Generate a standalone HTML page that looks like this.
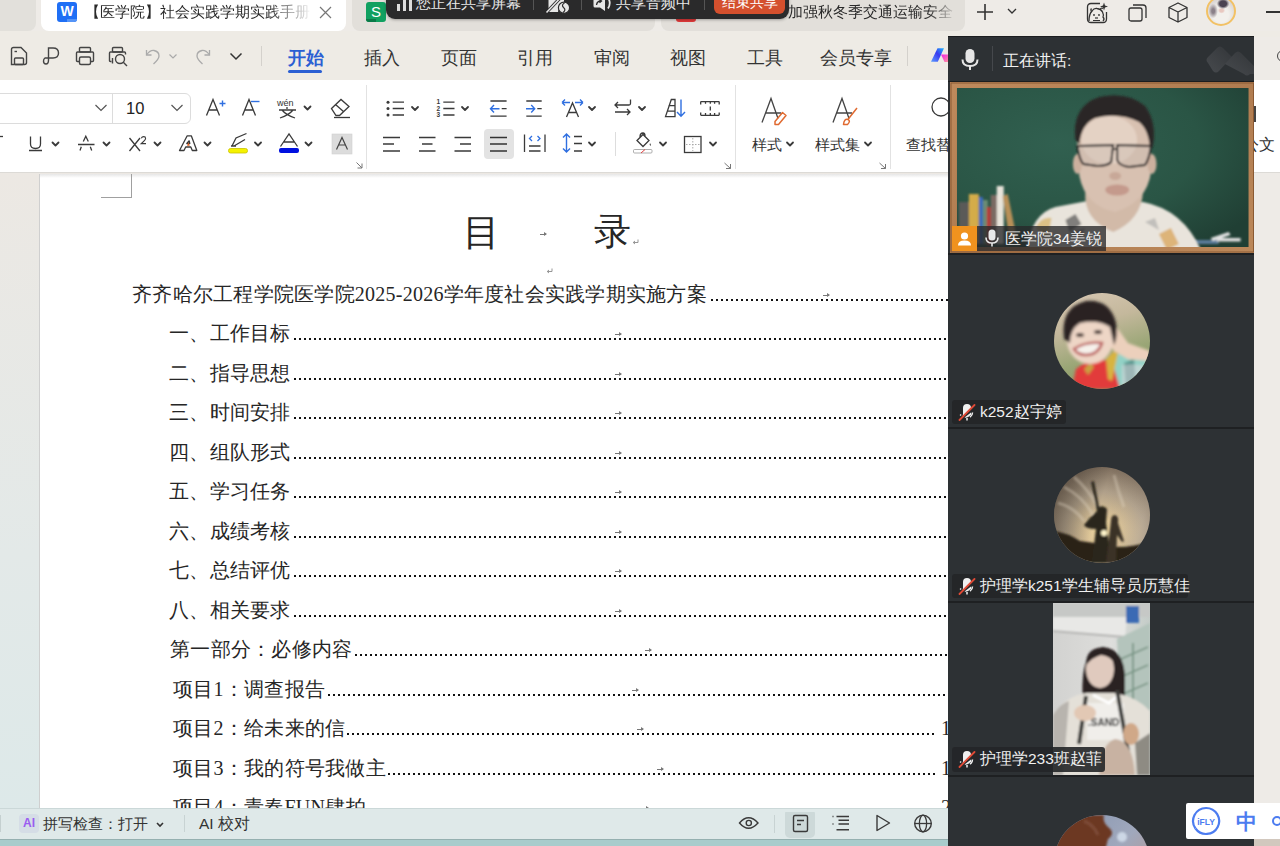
<!DOCTYPE html>
<html><head><meta charset="utf-8">
<style>
@font-face{font-family:"LSCJK";src:local("Liberation Sans");unicode-range:U+2E80-9FFF,U+F900-FAFF,U+FE30-FE4F,U+FF00-FFEF,U+3000-303F;size-adjust:133.333%}
@font-face{font-family:"LSCJK";src:local("Liberation Sans Bold");font-weight:bold;unicode-range:U+2E80-9FFF,U+F900-FAFF,U+FE30-FE4F,U+FF00-FFEF,U+3000-303F;size-adjust:133.333%}
*{margin:0;padding:0;box-sizing:border-box}
html,body{width:1280px;height:846px;overflow:hidden;background:#edeae6;font-family:"LSCJK","Liberation Sans",sans-serif;color:#333}
.a{position:absolute}
#tabbar{left:0;top:0;width:1280px;height:38px;background:#eeebe7}
#menu{left:0;top:31px;width:1280px;height:49px;background:#eeebe5}
#ribbon{left:0;top:80px;width:1280px;height:93px;background:#fff;border-bottom:1px solid #dcdad6}
#docbg{left:0;top:173px;width:1280px;height:635px;background:linear-gradient(180deg,#ece8e3 0%,#e3e9e8 60%,#dde9e9 100%)}
#page{left:40px;top:174px;width:908px;height:634px;background:#fff}
#status{left:0;top:808px;width:1280px;height:32px;background:#dfe9e9;border-top:1px solid #cbd8d8}
#bstrip{left:0;top:839px;width:1280px;height:7px;background:#a8cccc;border-top:1px solid #95b0b0}
#panel{left:948px;top:37px;width:306px;height:809px;background:#2d3134}
#rstrip{left:1254px;top:37px;width:26px;height:809px;background:#eeebe7}
.mt{font-size:17.5px;line-height:24px;color:#333;white-space:nowrap}
.rt{font-size:15px;line-height:22px;color:#333;white-space:nowrap}
.st{font-size:15px;line-height:22px;color:#333;white-space:nowrap}
.pn{font-size:15.5px;line-height:22px;color:#f0f0f0;white-space:nowrap}
.doc{font-family:"LSCJK","Liberation Serif",serif;font-size:20px;line-height:24px;color:#262626;white-space:nowrap;letter-spacing:.25px}
.dots{height:2px;background:repeating-linear-gradient(90deg,#111 0 2px,transparent 2px 5px)}
.tabm{width:8px;height:5px;background:linear-gradient(#777,#777) 0 2px/6px 1px no-repeat}
.tabm:after{content:"";position:absolute;left:4px;top:0;border-left:3px solid #777;border-top:2.5px solid transparent;border-bottom:2.5px solid transparent}
</style></head><body>
<div id="tabbar" class="a"></div>
<div id="menu" class="a"></div>
<div id="ribbon" class="a"></div>
<div id="docbg" class="a"></div>
<div id="page" class="a"></div>
<div id="rstrip" class="a"></div>
<!-- RIBBON -->
<div class="a" style="left:-6px;top:93px;width:197px;height:31px;border:1px solid #dcdcdc;border-radius:6px;background:#fff"></div>
<div class="a" style="left:112px;top:94px;width:1px;height:29px;background:#dcdcdc"></div>
<div class="a" style="left:126px;top:96px;font-size:16.5px;line-height:24px;color:#222">10</div>
<svg class="a" style="left:0;top:80px" width="948" height="93" viewBox="0 80 948 93">
<path d="M95.5 105L101 110.5L106.5 105" stroke="#555" stroke-width="1.2" fill="none"/>
<path d="M171.5 105L177 110.5L182.5 105" stroke="#555" stroke-width="1.2" fill="none"/>
<!-- A+ -->
<path d="M206.5 115.5L213 99.5L219.5 115.5M208.8 110H217.2" stroke="#3a3a3a" stroke-width="1.3" fill="none"/>
<path d="M219.5 103.5H225.5M222.5 100.5V106.5" stroke="#2f6fe0" stroke-width="1.4"/>
<path d="M242.5 115.5L249 99.5L255.5 115.5M244.8 110H253.2" stroke="#3a3a3a" stroke-width="1.3" fill="none"/>
<path d="M251 101.5H259.5" stroke="#2f6fe0" stroke-width="1.4"/>
<!-- wen -->
<text x="277" y="106" font-size="9" font-family="Liberation Sans" fill="#333">wén</text>
<path d="M287 107V109M279 110H296M282 110Q286 115 295 118M293 110Q289 115 280 118" stroke="#3a3a3a" stroke-width="1.3" fill="none"/>
<path d="M304.5 106.5L307.5 109.5L310.5 106.5" stroke="#3a3a3a" stroke-width="1.8" fill="none" stroke-linecap="round" stroke-linejoin="round"/>
<!-- eraser -->
<path d="M331.5 108.5L341 99.5L349 106.5L339.5 115.5H336Z M335.5 104.5L344 112" stroke="#3a3a3a" stroke-width="1.3" fill="none"/>
<path d="M334 117.5H350" stroke="#3a3a3a" stroke-width="1.3" fill="none"/>
<!-- row2 -->
<path d="M0 136.5H3" stroke="#3a3a3a" stroke-width="1.3" fill="none"/>
<path d="M30.5 136.5V144Q30.5 148.5 35.5 148.5Q40.5 148.5 40.5 144V136.5M29 150.5H42" stroke="#3a3a3a" stroke-width="1.3" fill="none"/>
<path d="M52.5 142.5L55.5 145.5L58.5 142.5" stroke="#3a3a3a" stroke-width="1.8" fill="none" stroke-linecap="round" stroke-linejoin="round"/>
<path d="M83.3 141.5L85.8 136.2L88.3 141.5M78 144.5H94.5M81.3 146.8L80 150.5M90.3 146.8L91.7 150.5" stroke="#3a3a3a" stroke-width="1.3" fill="none"/>
<path d="M103.5 142.5L106.5 145.5L109.5 142.5" stroke="#3a3a3a" stroke-width="1.8" fill="none" stroke-linecap="round" stroke-linejoin="round"/>
<path d="M129.5 138L140 151M140 138L129.5 151" stroke="#3a3a3a" stroke-width="1.3" fill="none"/>
<path d="M141.3 138.3Q142 136.6 143.7 136.6Q145.6 136.6 145.6 138.4Q145.6 139.8 141.2 143.6H146" stroke="#3a3a3a" stroke-width="1.1" fill="none"/>
<path d="M154.5 142.5L157.5 145.5L160.5 142.5" stroke="#3a3a3a" stroke-width="1.8" fill="none" stroke-linecap="round" stroke-linejoin="round"/>
<path d="M179.5 150.5L187.2 135.8H191.3L196.8 150.5H192.3L190.8 147H185.7L184 150.5Z M186.8 143.5H189.8L189.2 140.8Z" stroke="#3a3a3a" stroke-width="1.3" fill="none" stroke-linejoin="round"/>
<path d="M187 145.8L188.4 142.6L189.8 145.8Z" fill="#e06020"/>
<path d="M204.5 142.5L207.5 145.5L210.5 142.5" stroke="#3a3a3a" stroke-width="1.8" fill="none" stroke-linecap="round" stroke-linejoin="round"/>
<path d="M232 146L236 138L246.5 133.5M234 146L245 139.5M231 146H236" stroke="#3a3a3a" stroke-width="1.3" fill="none"/>
<rect x="228.5" y="148.5" width="19" height="4.5" rx="2" fill="#f5f200" stroke="#c9c200" stroke-width=".8"/>
<path d="M255 142.5L258 145.5L261 142.5" stroke="#3a3a3a" stroke-width="1.8" fill="none" stroke-linecap="round" stroke-linejoin="round"/>
<path d="M280.5 146.5L289 134L297.5 146.5M283.5 142H294.5" stroke="#3a3a3a" stroke-width="1.3" fill="none"/>
<rect x="279" y="148" width="20" height="5" rx="2" fill="#0010e0"/>
<path d="M305.5 142.5L308.5 145.5L311.5 142.5" stroke="#3a3a3a" stroke-width="1.8" fill="none" stroke-linecap="round" stroke-linejoin="round"/>
<rect x="332" y="134" width="20" height="20" fill="#dcdcdc" stroke="#d0d0d0" stroke-width=".6"/>
<path d="M336.5 149.5L342 137.5L347.5 149.5M338.5 145H345.5" stroke="#444" stroke-width="1.2" fill="none"/>
<path d="M356.5 162.5L362 168M362 163.5V168H357.5" stroke="#777" stroke-width="1" fill="none"/>
<!-- paragraph row1 -->
<circle cx="388" cy="102.2" r="1.5" fill="#3a3a3a"/><circle cx="388" cy="108.5" r="1.5" fill="#3a3a3a"/><circle cx="388" cy="115" r="1.5" fill="#3a3a3a"/>
<path d="M392.7 102.2H404M392.7 108.5H404M392.7 115H404" stroke="#3a3a3a" stroke-width="1.3" fill="none"/>
<path d="M412 107L415 110L418 107" stroke="#3a3a3a" stroke-width="1.8" fill="none" stroke-linecap="round" stroke-linejoin="round"/>
<text x="436.5" y="104" font-size="6.5" font-weight="bold" font-family="Liberation Sans" fill="#3a3a3a">1</text><text x="436.5" y="110.5" font-size="6.5" font-weight="bold" font-family="Liberation Sans" fill="#3a3a3a">2</text><text x="436.5" y="117" font-size="6.5" font-weight="bold" font-family="Liberation Sans" fill="#3a3a3a">3</text>
<path d="M443.3 102.2H454.5M443.3 108.5H454.5M443.3 115H454.5" stroke="#3a3a3a" stroke-width="1.3" fill="none"/>
<path d="M462 107L465 110L468 107" stroke="#3a3a3a" stroke-width="1.8" fill="none" stroke-linecap="round" stroke-linejoin="round"/>
<path d="M490.4 101H506.6M490.4 116.2H506.6M501.7 108.7H506.6" stroke="#3a3a3a" stroke-width="1.3" fill="none"/>
<path d="M494 105L490.5 108.7L494 112.4M490.8 108.7H499.5" stroke="#2f6fe0" stroke-width="1.4" fill="none"/>
<path d="M526.3 101H541.7M526.3 116.2H541.7M537.3 108.7H541.7" stroke="#3a3a3a" stroke-width="1.3" fill="none"/>
<path d="M531.2 105L534.7 108.7L531.2 112.4M526 108.7H534.4" stroke="#2f6fe0" stroke-width="1.4" fill="none"/>
<path d="M566.5 117L572.5 103L578.5 117M568.5 112.5H576.5" stroke="#3a3a3a" stroke-width="1.3" fill="none"/>
<path d="M562 102.5L565 99.5M562 102.5L565 105.5M562 102.5H570M583 102.5L580 99.5M583 102.5L580 105.5M583 102.5H575" stroke="#2f6fe0" stroke-width="1.3" fill="none"/>
<path d="M589 107L592 110L595 107" stroke="#3a3a3a" stroke-width="1.8" fill="none" stroke-linecap="round" stroke-linejoin="round"/>
<path d="M615 105H629Q630.5 105 630.5 103.5V99.5M618 102L615 105L618 108M615 112H630M627 109L630 112L627 115" stroke="#3a3a3a" stroke-width="1.3" fill="none"/>
<path d="M639 107L642 110L645 107" stroke="#3a3a3a" stroke-width="1.8" fill="none" stroke-linecap="round" stroke-linejoin="round"/>
<path d="M665.5 116.6L671.3 99.5H675V116.6Z M668.5 105.7H675M666.8 111.2H675" stroke="#3a3a3a" stroke-width="1.3" fill="none"/>
<path d="M681 99.5V116M677 112L681 116.3L685 112" stroke="#2f6fe0" stroke-width="1.4" fill="none"/>
<path d="M700.7 101.6H719.2M700.7 115.3H719.2M700.7 101.6V104.5M705.5 101.6V103.8M710.3 101.6V103.8M714.6 101.6V103.8M719.2 101.6V104.5M700.7 115.3V112.4M705.5 115.3V113M710.3 115.3V113M714.6 115.3V113M719.2 115.3V112.4M710.3 106.5V110.5" stroke="#3a3a3a" stroke-width="1.3" fill="none"/>
<!-- paragraph row2 -->
<path d="M383 137.5H400M383 144H394M383 151H400" stroke="#3a3a3a" stroke-width="1.3" fill="none"/>
<path d="M419 137.5H435.5M422 144H432.5M419 151H435.5" stroke="#3a3a3a" stroke-width="1.3" fill="none"/>
<path d="M454.5 137.5H471M460 144H471M454.5 151H471" stroke="#3a3a3a" stroke-width="1.3" fill="none"/>
<rect x="484" y="129" width="30" height="30" rx="4" fill="#e3e3e3"/>
<path d="M490 137.5H507M490 144H507M490 151H507" stroke="#333" stroke-width="1.4"/>
<path d="M524.5 134.5V152M545 134.5V152M529 146H540.5M529 151H540.5" stroke="#3a3a3a" stroke-width="1.3" fill="none"/>
<path d="M532 136L529.5 138.5L532 141M537.5 136L540 138.5L537.5 141" stroke="#2f6fe0" stroke-width="1.3" fill="none"/>
<path d="M566.5 134V152M563 137.5L566.5 134L570 137.5M563 148.5L566.5 152L570 148.5" stroke="#2f6fe0" stroke-width="1.4" fill="none"/>
<path d="M574 136.5H582M574 143.5H582M574 151H582" stroke="#3a3a3a" stroke-width="1.3" fill="none"/>
<path d="M589 142.5L592 145.5L595 142.5" stroke="#3a3a3a" stroke-width="1.8" fill="none" stroke-linecap="round" stroke-linejoin="round"/>
<path d="M615.5 132V156" stroke="#ddd" stroke-width="1"/>
<path d="M637 140.5L643 134.5L649 140.5L643 146.5Z M640 137Q640 133 643 133Q645 133 645 136" stroke="#3a3a3a" stroke-width="1.3" fill="none"/>
<path d="M650 143Q651.5 145 650.5 146Q649 145 650 143Z" fill="#333"/>
<rect x="633.5" y="149.5" width="18.5" height="3.5" rx="1" stroke="#999" stroke-width=".8" fill="none"/><path d="M641 153L645 149.5" stroke="#e04040" stroke-width="1"/>
<path d="M660 142.5L663 145.5L666 142.5" stroke="#3a3a3a" stroke-width="1.8" fill="none" stroke-linecap="round" stroke-linejoin="round"/>
<rect x="684.5" y="136.5" width="16.5" height="16" stroke="#3a3a3a" stroke-width="1.3" fill="none"/>
<path d="M692.8 138V151M686 144.5H699.5" stroke="#aaa" stroke-width="1" stroke-dasharray="1.5 1.5"/>
<path d="M710 142.5L713 145.5L716 142.5" stroke="#3a3a3a" stroke-width="1.8" fill="none" stroke-linecap="round" stroke-linejoin="round"/>
<path d="M724.5 163L730.5 168.5M730.5 164V168.5H726" stroke="#777" stroke-width="1" fill="none"/>
<path d="M366.5 85V169M735.5 85V169M890.5 85V169" stroke="#e2e2e2" stroke-width="1"/>
<!-- styles -->
<path d="M762 122.5L771 98.5L778 118.5M766 113H781" stroke="#444" stroke-width="1.3" fill="none"/>
<path d="M775 121.5L782.5 112.5L786 115.5L778.5 124.5H775Z" stroke="#e06a30" stroke-width="1.5" fill="none" stroke-linejoin="round"/>
<path d="M833 122.5L842 98.5L849 118.5M837 113H852" stroke="#444" stroke-width="1.3" fill="none"/>
<path d="M847.5 120L857 108M843.5 124.5Q844 118.5 848 119.5Q851 121 847.5 124.5Z" stroke="#e06a30" stroke-width="1.5" fill="none" stroke-linejoin="round"/>
<path d="M787 142.5L790 145.5L793 142.5" stroke="#3a3a3a" stroke-width="1.8" fill="none" stroke-linecap="round" stroke-linejoin="round"/>
<path d="M865 142.5L868 145.5L871 142.5" stroke="#3a3a3a" stroke-width="1.8" fill="none" stroke-linecap="round" stroke-linejoin="round"/>
<path d="M879.5 163L885.5 168.5M885.5 164V168.5H881" stroke="#777" stroke-width="1" fill="none"/>
<circle cx="941" cy="107" r="9" stroke="#3a3a3a" stroke-width="1.3" fill="none"/>
</svg>
<div class="a rt" style="left:752px;top:134px">样式</div>
<div class="a rt" style="left:815px;top:134px">样式集</div>
<div class="a rt" style="left:906px;top:134px">查找替</div>
<div class="a" style="left:1254px;top:80px;width:26px;height:93px;background:#fff;border-bottom:1px solid #dcdad6"></div>
<div class="a rt" style="left:1243px;top:134px;font-size:16px">公文</div>
<div class="a" style="left:1254px;top:106px;width:1.5px;height:16px;background:#444"></div>

<div class="a" style="left:0;top:0;width:948px;height:808px;overflow:hidden"><!-- DOC -->
<div class="a" style="left:39px;top:174px;width:1px;height:634px;background:#cfcfcf"></div>
<div class="a" style="left:40px;top:174px;width:908px;height:4px;background:linear-gradient(#e6e6e6,#fff)"></div>
<div class="a" style="left:101px;top:197px;width:31px;height:1px;background:#a0a0a0"></div>
<div class="a" style="left:131px;top:174px;width:1px;height:24px;background:#a0a0a0"></div>
<div class="a doc" style="left:463px;top:208px;font-size:37px;line-height:50px">目</div>
<div class="a doc" style="left:594px;top:207px;font-size:37px;line-height:50px">录</div>
<div class="a tabm" style="left:540px;top:232px"></div>
<svg class="a" style="left:632px;top:239px" width="7" height="6" viewBox="0 0 7 6"><path d="M6 0.5V3.5H1.5M3 2L1.2 3.5L3 5" stroke="#8a8a8a" stroke-width=".9" fill="none"/></svg>
<svg class="a" style="left:546px;top:268px" width="7" height="6" viewBox="0 0 7 6"><path d="M6 0.5V3.5H1.5M3 2L1.2 3.5L3 5" stroke="#8a8a8a" stroke-width=".9" fill="none"/></svg>
<div class="a doc" style="left:132px;top:281.7px">齐齐哈尔工程学院医学院2025-2026学年度社会实践学期实施方案</div>
<div class="a dots" style="left:711px;top:298.7px;width:237px"></div>
<div class="a tabm" style="left:823px;top:292.7px"></div>
<div class="a doc" style="left:169px;top:321.2px">一、工作目标</div>
<div class="a dots" style="left:294px;top:338.2px;width:654px"></div>
<div class="a tabm" style="left:615px;top:332.2px"></div>
<div class="a doc" style="left:169px;top:360.7px">二、指导思想</div>
<div class="a dots" style="left:294px;top:377.7px;width:654px"></div>
<div class="a tabm" style="left:615px;top:371.7px"></div>
<div class="a doc" style="left:169px;top:400.2px">三、时间安排</div>
<div class="a dots" style="left:294px;top:417.2px;width:654px"></div>
<div class="a tabm" style="left:615px;top:411.2px"></div>
<div class="a doc" style="left:169px;top:439.7px">四、组队形式</div>
<div class="a dots" style="left:294px;top:456.7px;width:654px"></div>
<div class="a tabm" style="left:615px;top:450.7px"></div>
<div class="a doc" style="left:169px;top:479.2px">五、学习任务</div>
<div class="a dots" style="left:294px;top:496.2px;width:654px"></div>
<div class="a tabm" style="left:615px;top:490.2px"></div>
<div class="a doc" style="left:169px;top:518.7px">六、成绩考核</div>
<div class="a dots" style="left:294px;top:535.7px;width:654px"></div>
<div class="a tabm" style="left:615px;top:529.7px"></div>
<div class="a doc" style="left:169px;top:558.2px">七、总结评优</div>
<div class="a dots" style="left:294px;top:575.2px;width:654px"></div>
<div class="a tabm" style="left:615px;top:569.2px"></div>
<div class="a doc" style="left:169px;top:597.7px">八、相关要求</div>
<div class="a dots" style="left:294px;top:614.7px;width:654px"></div>
<div class="a tabm" style="left:615px;top:608.7px"></div>
<div class="a doc" style="left:170px;top:637.2px">第一部分：必修内容</div>
<div class="a dots" style="left:355px;top:654.2px;width:593px"></div>
<div class="a tabm" style="left:645px;top:648.2px"></div>
<div class="a doc" style="left:173px;top:676.7px">项目1：调查报告</div>
<div class="a dots" style="left:328px;top:693.7px;width:620px"></div>
<div class="a tabm" style="left:632px;top:687.7px"></div>
<div class="a doc" style="left:173px;top:716.2px">项目2：给未来的信</div>
<div class="a dots" style="left:347px;top:733.2px;width:588px"></div>
<div class="a tabm" style="left:637px;top:727.2px"></div>
<div class="a doc" style="left:941px;top:716.2px">1</div>
<div class="a doc" style="left:173px;top:755.7px">项目3：我的符号我做主</div>
<div class="a dots" style="left:388px;top:772.7px;width:547px"></div>
<div class="a tabm" style="left:657px;top:766.7px"></div>
<div class="a doc" style="left:941px;top:755.7px">1</div>
<div class="a doc" style="left:173px;top:795.2px">项目4：青春FUN肆拍</div>
<div class="a dots" style="left:370px;top:812.2px;width:565px"></div>
<div class="a tabm" style="left:642px;top:806.2px"></div>
<div class="a doc" style="left:941px;top:795.2px">2</div>

</div>
<div id="status" class="a"></div>
<div id="bstrip" class="a"></div>
<!-- STATUS -->
<div class="a" style="left:0;top:815px;width:1px;height:17px;background:#c5d0d0"></div>
<div class="a" style="left:19px;top:814px;width:20px;height:19px;background:#d5dde6;border-radius:4px"></div>
<div class="a" style="left:19px;top:814px;width:20px;height:19px;font-size:12px;line-height:19px;text-align:center;font-weight:bold;color:#9a5cf0">AI</div>
<div class="a st" style="left:43px;top:813px">拼写检查：打开</div>
<svg class="a" style="left:156px;top:822px" width="8" height="6" viewBox="0 0 8 6"><path d="M1 1L4 4L7 1" stroke="#333" stroke-width="1.6" fill="none"/></svg>
<div class="a" style="left:184px;top:815px;width:1px;height:17px;background:#c8d3d3"></div>
<div class="a st" style="left:199px;top:813px;font-size:15.5px">AI 校对</div>
<svg class="a" style="left:736px;top:812px" width="200" height="26" viewBox="736 812 200 26">
<path d="M739.5 823Q748.5 812.5 758 823Q748.5 833.5 739.5 823Z" stroke="#3a3a3a" stroke-width="1.4" fill="none"/><circle cx="748.8" cy="823" r="2.6" stroke="#3a3a3a" stroke-width="1.4" fill="none"/>
<path d="M774.5 815V833" stroke="#c8d3d3" stroke-width="1"/>
<rect x="785" y="809" width="30" height="29" rx="5" fill="#cdd9d9"/>
<rect x="793.5" y="815.5" width="14" height="16" rx="1.5" stroke="#3a3a3a" stroke-width="1.4" fill="none"/><path d="M797 820.5H804M797 824.5H801" stroke="#3a3a3a" stroke-width="1.4"/>
<path d="M832.5 816.5H833.5M832.5 824H833.5M836.5 816.5H849M838.5 820.2H849M838.5 824H849M836.5 829.7H849" stroke="#3a3a3a" stroke-width="1.4"/>
<path d="M877 815.5L889.5 823L877 830.5Z" stroke="#3a3a3a" stroke-width="1.4" fill="none" stroke-linejoin="round"/>
<circle cx="923" cy="823.5" r="8.3" stroke="#3a3a3a" stroke-width="1.4" fill="none"/><ellipse cx="923" cy="823.5" rx="3.6" ry="8.3" stroke="#3a3a3a" stroke-width="1.3" fill="none"/><path d="M914.7 823.5H931.3" stroke="#3a3a3a" stroke-width="1.3"/>
</svg>

<div id="panel" class="a"></div>
<!-- PANEL -->
<div class="a" style="left:948px;top:36px;width:306px;height:1px;background:#1b1d1f"></div>
<svg class="a" style="left:961px;top:48px" width="18" height="23" viewBox="0 0 18 23"><rect x="4.5" y="1" width="9" height="14" rx="4.5" fill="#e6e6e6"/><path d="M1.5 11.5Q1.5 18 9 18Q16.5 18 16.5 11.5" stroke="#e6e6e6" stroke-width="2" fill="none"/><path d="M9 18V22" stroke="#e6e6e6" stroke-width="2"/></svg>
<div class="a" style="left:992px;top:46px;width:1px;height:25px;background:#45484c"></div>
<div class="a" style="left:1003px;top:50px;font-size:15.5px;line-height:22px;color:#f2f2f2;white-space:nowrap">正在讲话:</div>
<svg class="a" style="left:1204px;top:44px" width="50" height="32" viewBox="0 0 50 32"><defs><linearGradient id="wmg" x1="0" y1="1" x2="1" y2="0"><stop offset="0" stop-color="#4a4d51"/><stop offset="1" stop-color="#34373a"/></linearGradient></defs>
<path d="M4 19Q1 16 4 13L13 4Q16 1 19 4L28 13L15 27Q12 30 9 27Z" fill="url(#wmg)" opacity=".9"/>
<path d="M21 20L31 9Q34 6 37 9L50 22V30L46 30Q43 33 40 30Z" fill="url(#wmg)" opacity=".9"/></svg>
<div class="a" style="left:1277px;top:50px;width:12px;height:12px;border:1.6px solid #444;border-radius:50%"></div>
<div class="a" style="left:948px;top:81px;width:306px;height:1px;background:#1b1d1f"></div>
<!-- tile1 -->
<svg class="a" style="left:949.5px;top:82px" width="304.5" height="172" viewBox="0 0 306 172" preserveAspectRatio="none">
<defs>
<linearGradient id="wood" x1="0" y1="0" x2="1" y2="1"><stop offset="0" stop-color="#bf8a5c"/><stop offset=".5" stop-color="#b07c50"/><stop offset="1" stop-color="#bc885a"/></linearGradient>
<radialGradient id="board" cx=".35" cy=".35" r=".8"><stop offset="0" stop-color="#316050"/><stop offset=".6" stop-color="#2a5545"/><stop offset="1" stop-color="#203f34"/></radialGradient>
<filter id="bl1"><feGaussianBlur stdDeviation="1.2"/></filter>
<filter id="bl2"><feGaussianBlur stdDeviation="2.5"/></filter>
<clipPath id="brd"><rect x="7" y="6" width="293" height="159"/></clipPath>
</defs>
<rect x="0" y="0" width="306" height="171" fill="url(#wood)"/>
<rect x="1" y="1" width="304" height="169" fill="none" stroke="#8a5a34" stroke-width="1"/>
<rect x="7" y="6" width="293" height="159" fill="url(#board)"/>
<g clip-path="url(#brd)">
<g filter="url(#bl1)">
<rect x="9" y="120" width="12" height="40" fill="#5a5a58"/>
<rect x="19" y="112" width="10" height="50" fill="#d4ac48"/>
<rect x="29" y="115" width="4" height="47" fill="#3a6cc0"/>
<rect x="33" y="118" width="5" height="44" fill="#6c8c74"/>
<rect x="37" y="125" width="4" height="38" fill="#b83838"/>
<rect x="41" y="113" width="7" height="48" fill="#7a6a62"/>
<rect x="47" y="104" width="7" height="58" fill="#e8e4da"/>
<path d="M53 114L58 112L68 160H60Z" fill="#b89058"/>
<rect x="240" y="158" width="30" height="4" fill="#5a7a9a"/>
<path d="M262 156L280 150L282 153L264 159Z" fill="#e4e4e4"/><rect x="268" y="156" width="24" height="3.5" fill="#e0e0e0"/>
</g>
<g filter="url(#bl1)">
<path d="M77 172Q80 132 106 125L138 119Q166 124 194 120Q236 128 254 172Z" fill="#e9e4dc"/>
<path d="M86 146Q92 134 102 136L98 158Z" fill="#d8b870" opacity=".8"/>
<path d="M116 138L126 132L132 142L120 150Z" fill="#3a3a3a" opacity=".6"/>
<path d="M120 150L136 146L130 158Z" fill="#555" opacity=".5"/>
<path d="M210 152L222 146L230 162L218 168Z" fill="#d9a860" opacity=".8"/>
<path d="M196 140L206 136L210 148Z" fill="#999" opacity=".5"/>
<path d="M136 110Q134 138 164 150Q192 138 194 110Z" fill="#d2baa8"/>
<path d="M128 60Q126 30 160 24Q196 26 202 62L202 90Q198 120 166 130Q136 124 130 94Z" fill="#d8c1b1"/>
<ellipse cx="160" cy="58" rx="28" ry="24" fill="#e4d2c4"/>
<ellipse cx="128" cy="82" rx="4.5" ry="10" fill="#ccb09e"/>
<ellipse cx="203" cy="82" rx="4.5" ry="10" fill="#ccb09e"/>
<path d="M126 58Q122 24 150 15Q178 9 196 24Q208 40 204 64L201 68Q200 48 190 40Q170 30 146 36Q132 42 130 62Z" fill="#2c2826"/>
<path d="M128 64L164 63L162 80Q158 84 148 84L134 82Q130 78 128 64Z" fill="#c8b8b0" fill-opacity=".4" stroke="#262324" stroke-width="2"/>
<path d="M168 63L202 64Q200 78 196 83L180 85Q170 84 168 78Z" fill="#c8b8b0" fill-opacity=".4" stroke="#262324" stroke-width="2"/>
<path d="M164 67H168" stroke="#262324" stroke-width="1.8"/>
<ellipse cx="168" cy="108" rx="12" ry="5.5" fill="#c49a8c"/>
<ellipse cx="166" cy="94" rx="6" ry="4" fill="#c8a898"/>
</g>
</g>
</g>
</svg>
<div class="a" style="left:952px;top:226px;width:25px;height:25px;background:#f0921e"></div>
<svg class="a" style="left:956px;top:230px" width="17" height="17" viewBox="0 0 17 17"><circle cx="8.5" cy="6" r="3.6" fill="#fff"/><path d="M2 15.5Q2 10.5 8.5 10.5Q15 10.5 15 15.5Z" fill="#fff"/></svg>
<div class="a" style="left:977px;top:226px;width:129px;height:25px;background:rgba(40,40,42,.78)"></div>
<svg class="a" style="left:985px;top:229px" width="14" height="18" viewBox="0 0 14 18"><rect x="3.5" y="0.5" width="7" height="11" rx="3.5" fill="#e8e8e8"/><path d="M1 8.5Q1 14 7 14Q13 14 13 8.5" stroke="#e8e8e8" stroke-width="1.6" fill="none"/><path d="M7 14V17.5" stroke="#e8e8e8" stroke-width="1.6"/></svg>
<div class="a pn" style="left:1005px;top:228px">医学院34姜锐</div>
<div class="a" style="left:948px;top:253px;width:306px;height:2px;background:#1e2022"></div>
<!-- tile2 -->
<svg class="a" style="left:1054px;top:293px" width="96" height="96" viewBox="0 0 96 96">
<defs><clipPath id="c2"><circle cx="48" cy="48" r="48"/></clipPath><filter id="b2"><feGaussianBlur stdDeviation="1.6"/></filter>
<linearGradient id="g2" x1="0" y1="0" x2=".3" y2="1"><stop offset="0" stop-color="#d8c8b4"/><stop offset=".4" stop-color="#c4b89c"/><stop offset=".75" stop-color="#9aa676"/><stop offset="1" stop-color="#8a9a66"/></linearGradient></defs>
<g clip-path="url(#c2)">
<rect width="96" height="96" fill="url(#g2)"/>
<g filter="url(#b2)">
<path d="M58 96L60 62Q76 56 94 62L96 96Z" fill="#92d2c6"/>
<path d="M70 70L80 66L82 96H72Z" fill="#2a6a66" opacity=".6"/>
<path d="M68 72Q82 70 96 74V96H68Z" fill="#e8d8e0" opacity=".5"/>
<path d="M18 96L22 76Q36 64 58 68L66 96Z" fill="#e23a3a"/>
<path d="M52 66L60 58L64 60L58 88L54 86Z" fill="#d8b440"/>
<path d="M30 76L36 70L40 74L34 82Z" fill="#c8a040"/>
<path d="M46 18L52 16L58 38L64 36L74 50L96 58V68L74 66L60 58L50 44Z" fill="#ecd0bc"/>
<ellipse cx="36" cy="47" rx="23" ry="24" fill="#eed6c6"/>
<path d="M10 46Q6 14 32 8Q56 6 62 30Q64 44 60 52L56 34Q44 26 26 30Q16 36 16 50Z" fill="#2a2222"/>
<path d="M20 56Q32 48 48 50Q44 62 32 62Q24 62 20 56Z" fill="#f6f2ec" stroke="#b85050" stroke-width="2.4"/>
<ellipse cx="26" cy="42" rx="4" ry="2" fill="#3a2a28"/><ellipse cx="44" cy="39" rx="4" ry="2" fill="#3a2a28"/>
</g></g></svg>
<div class="a" style="left:952px;top:400px;width:114px;height:24px;background:#242628;border-radius:3px"></div>
<svg class="a" style="left:958px;top:403px" width="18" height="18" viewBox="0 0 18 18"><path d="M4.5 14.5L13 6V5Q13 1 9 1Q5 1 5 5V11Z" fill="#f0f0f0"/><path d="M6.5 14.5Q9 15 11 13.5L13 11.5V9.5Z" fill="#f0f0f0"/><path d="M3 12.5L2.2 11.5" stroke="#f0f0f0" stroke-width="1.5"/><path d="M9 15V17.5" stroke="#f0f0f0" stroke-width="1.5"/><path d="M14.5 9.5Q14.5 12.5 12 14" stroke="#f0f0f0" stroke-width="1.5" fill="none"/><path d="M1.5 17L16.5 2" stroke="#e04a36" stroke-width="1.8" stroke-linecap="round"/></svg>
<div class="a pn" style="left:980px;top:401px">k252赵宇婷</div>
<div class="a" style="left:948px;top:427px;width:306px;height:2px;background:#1e2022"></div>
<!-- tile3 -->
<svg class="a" style="left:1054px;top:467px" width="96" height="96" viewBox="0 0 96 96">
<defs><clipPath id="c3"><circle cx="48" cy="48" r="48"/></clipPath><filter id="b3"><feGaussianBlur stdDeviation="1.2"/></filter>
<radialGradient id="g3" cx=".52" cy=".68" r=".7"><stop offset="0" stop-color="#f4dca0"/><stop offset=".25" stop-color="#dcc498"/><stop offset=".6" stop-color="#b0a08a"/><stop offset="1" stop-color="#7a6a5a"/></radialGradient>
<linearGradient id="g3b" x1="0" y1="0" x2="1" y2=".3"><stop offset="0" stop-color="#3a3026" stop-opacity=".45"/><stop offset=".55" stop-color="#000" stop-opacity="0"/><stop offset="1" stop-color="#fff" stop-opacity=".08"/></linearGradient></defs>
<g clip-path="url(#c3)">
<rect width="96" height="96" fill="url(#g3)"/><rect width="96" height="96" fill="url(#g3b)"/>
<g filter="url(#b3)">
<path d="M10 20Q30 30 40 50M20 10Q34 22 44 40M60 8Q64 24 70 40M4 36Q20 40 30 54" stroke="#e8dcc8" stroke-width="3" opacity=".35" fill="none"/>
<path d="M0 64Q14 66 26 74Q44 76 62 80Q82 80 96 74V96H0Z" fill="#2a2418"/>
<path d="M37 15L40 14L45 40Q50 38 53 42L52 56L58 96H38L42 62Q32 62 30 58Q36 50 43 44Z" fill="#2c281e"/>
<path d="M57 54Q57 48 61 48Q65 49 64 56L70 74L68 75L63 68L62 96H52Z" fill="#3a3226"/>
<circle cx="50" cy="66" r="3" fill="#fff6cc"/>
</g></g></svg>
<div class="a" style="left:952px;top:574px;width:236px;height:24px;background:#242628;border-radius:3px"></div>
<svg class="a" style="left:958px;top:577px" width="18" height="18" viewBox="0 0 18 18"><path d="M4.5 14.5L13 6V5Q13 1 9 1Q5 1 5 5V11Z" fill="#f0f0f0"/><path d="M6.5 14.5Q9 15 11 13.5L13 11.5V9.5Z" fill="#f0f0f0"/><path d="M3 12.5L2.2 11.5" stroke="#f0f0f0" stroke-width="1.5"/><path d="M9 15V17.5" stroke="#f0f0f0" stroke-width="1.5"/><path d="M14.5 9.5Q14.5 12.5 12 14" stroke="#f0f0f0" stroke-width="1.5" fill="none"/><path d="M1.5 17L16.5 2" stroke="#e04a36" stroke-width="1.8" stroke-linecap="round"/></svg>
<div class="a pn" style="left:980px;top:575px">护理学k251学生辅导员历慧佳</div>
<div class="a" style="left:948px;top:601px;width:306px;height:2px;background:#1e2022"></div>
<!-- tile4 -->
<svg class="a" style="left:1053px;top:603px" width="97" height="172" viewBox="0 0 97 172">
<defs><filter id="b4"><feGaussianBlur stdDeviation="1.2"/></filter>
<linearGradient id="g4" x1="0" y1="0" x2="1" y2="0"><stop offset="0" stop-color="#d2d2d0"/><stop offset=".6" stop-color="#dededc"/><stop offset="1" stop-color="#c4ccc8"/></linearGradient></defs>
<rect width="97" height="172" fill="url(#g4)"/>
<g filter="url(#b4)">
<rect x="0" y="0" width="97" height="14" fill="#c6c8c6"/>
<path d="M0 14H74L72 34L0 28Z" fill="#e8e8e6"/>
<path d="M0 28L72 34" stroke="#b4b4b2" stroke-width="2"/>
<path d="M64 36L97 20V108L68 104Z" fill="#b4c4bc"/>
<path d="M68 56L95 44M68 74L95 62M68 92L95 80M80 40V104" stroke="#7a9686" stroke-width="1.8"/>
<rect x="73" y="3" width="13" height="17" fill="#3a6ab4"/>
<path d="M30 100Q26 46 50 44Q72 46 72 76L72 104Z" fill="#2a2224"/>
<ellipse cx="47" cy="66" rx="14" ry="19" fill="#e0cabe"/>
<path d="M33 62Q33 45 48 45Q64 45 64 62Q56 52 48 52Q40 54 33 62Z" fill="#2a2224"/>
<path d="M0 172V112Q14 92 34 90L62 90Q84 94 97 108V172Z" fill="#e4e0d8"/>
<path d="M0 112Q8 100 16 98L10 172H0Z" fill="#b8b4ae"/>
<path d="M34 100H71V137H34Z" fill="#f0eeea"/>
<path d="M40 92L56 100L66 92" stroke="#fff" stroke-width="3" fill="none"/>
<text x="35" y="123" font-size="10" font-weight="bold" font-family="Liberation Sans" fill="#1a1a1a">.SAND</text>
<path d="M33 93L26 141M64 87L79 171" stroke="#3a3a38" stroke-width="4"/>
<ellipse cx="32" cy="110" rx="11" ry="8" fill="#e2c8b4"/>
<ellipse cx="78" cy="131" rx="8" ry="11" fill="#d0a888"/>
<path d="M46 172Q48 140 62 136Q80 138 82 172Z" fill="#c8b2a2"/>
<path d="M82 140L97 130V172H84Z" fill="#6a6660" opacity=".7"/>
</g></svg>
<div class="a" style="left:952px;top:747px;width:153px;height:25px;background:rgba(36,38,40,.9);border-radius:3px"></div>
<svg class="a" style="left:958px;top:750px" width="18" height="18" viewBox="0 0 18 18"><path d="M4.5 14.5L13 6V5Q13 1 9 1Q5 1 5 5V11Z" fill="#f0f0f0"/><path d="M6.5 14.5Q9 15 11 13.5L13 11.5V9.5Z" fill="#f0f0f0"/><path d="M3 12.5L2.2 11.5" stroke="#f0f0f0" stroke-width="1.5"/><path d="M9 15V17.5" stroke="#f0f0f0" stroke-width="1.5"/><path d="M14.5 9.5Q14.5 12.5 12 14" stroke="#f0f0f0" stroke-width="1.5" fill="none"/><path d="M1.5 17L16.5 2" stroke="#e04a36" stroke-width="1.8" stroke-linecap="round"/></svg>
<div class="a pn" style="left:980px;top:748px">护理学233班赵菲</div>
<div class="a" style="left:948px;top:775px;width:306px;height:2px;background:#1e2022"></div>
<!-- tile5 -->
<svg class="a" style="left:1054px;top:815px" width="96" height="31" viewBox="0 0 96 31">
<defs><clipPath id="c5"><circle cx="48" cy="48" r="48"/></clipPath><filter id="b5"><feGaussianBlur stdDeviation="1.3"/></filter>
<linearGradient id="g5" x1="0" y1="0" x2="1" y2="1"><stop offset="0" stop-color="#8494b0"/><stop offset=".5" stop-color="#a0a8bc"/><stop offset="1" stop-color="#c09080"/></linearGradient></defs>
<g clip-path="url(#c5)"><rect width="96" height="96" fill="url(#g5)"/>
<g filter="url(#b5)"><path d="M0 0H50Q48 6 54 12Q62 18 54 24L50 40H0Z" fill="#6c3824"/><path d="M30 6Q40 10 44 20" stroke="#8a5a44" stroke-width="3" fill="none" opacity=".6"/><circle cx="68" cy="22" r="5" fill="#d8e4f0" opacity=".8"/></g></g></svg>
<!-- ifly -->
<div class="a" style="left:1186px;top:803px;width:94px;height:36px;background:#fff;border-radius:2px 0 0 2px"></div>
<svg class="a" style="left:1191px;top:806px" width="30" height="30" viewBox="0 0 30 30"><path d="M15 2A13 13 0 1 1 4.5 22.5" stroke="#4c7cf0" stroke-width="2.2" fill="none"/><path d="M4.5 22.5A13 13 0 0 1 15 2" stroke="#4c7cf0" stroke-width="2.2" fill="none" stroke-dasharray="30 3"/><text x="15" y="18.5" text-anchor="middle" font-size="8.5" font-weight="bold" font-family="Liberation Sans" fill="#4c7cf0">iFLY</text></svg>
<div class="a" style="left:1236px;top:809px;font-size:21px;line-height:26px;font-weight:bold;color:#4c7cf0">中</div>
<div class="a" style="left:1272px;top:816px;width:10px;height:10px;border:2.5px solid #4c7cf0;border-radius:50%"></div>
<div class="a" style="left:1254px;top:839px;width:26px;height:7px;background:#d2c8be"></div>


<!-- TAB BAR -->
<div class="a" style="left:0;top:0;width:36px;height:31px;background:#e2e0db;border-radius:0 0 8px 0"></div>
<div class="a" style="left:41px;top:0;width:305px;height:31px;background:#fff;border-radius:0 0 8px 8px"></div>
<div class="a" style="left:57px;top:2px;width:20px;height:20px;background:#1f6ff5;border-radius:3px;overflow:hidden"><div class="a" style="left:10px;top:17px;width:10px;height:3px;background:#5594f7"></div><div class="a" style="left:0;top:1px;width:20px;text-align:center;color:#fff;font-weight:bold;font-size:14px;line-height:16px">W</div></div>
<div class="a" style="left:85px;top:2px;width:228px;height:22px;font-size:15px;line-height:20px;color:#2a2a2a;white-space:nowrap;overflow:hidden;-webkit-mask-image:linear-gradient(90deg,#000 0,#000 80%,transparent 100%)">【医学院】社会实践学期实践手册</div>
<svg class="a" style="left:319px;top:6px" width="13" height="13" viewBox="0 0 13 13"><path d="M1 1L12 12M12 1L1 12" stroke="#777" stroke-width="1.2"/></svg>
<div class="a" style="left:352px;top:0;width:303px;height:31px;background:#e2dfda;border-radius:0 0 8px 8px"></div>
<div class="a" style="left:366px;top:2px;width:20px;height:20px;background:#10a060;border-radius:3px;overflow:hidden;color:#fff;font-size:15px;line-height:19px;text-align:center">S<div class="a" style="left:0;top:17px;width:10px;height:3px;background:#0a7a48"></div></div>
<div class="a" style="left:661px;top:0;width:304px;height:31px;background:#e2dfda;border-radius:0 0 8px 8px"></div>
<div class="a" style="left:676px;top:2px;width:20px;height:20px;background:#e03a3a;border-radius:3px"></div>
<div class="a" style="left:788px;top:2px;width:170px;height:22px;font-size:15px;line-height:20px;color:#2a2a2a;white-space:nowrap;overflow:hidden;-webkit-mask-image:linear-gradient(90deg,#000 0,#000 82%,transparent 100%)">加强秋冬季交通运输安全</div>
<svg class="a" style="left:976px;top:3px" width="18" height="18" viewBox="0 0 18 18"><path d="M9 1V17M1 9H17" stroke="#333" stroke-width="1.6"/></svg>
<svg class="a" style="left:1007px;top:8px" width="10" height="7" viewBox="0 0 10 7"><path d="M1 1L5 5L9 1" stroke="#333" stroke-width="1.3" fill="none"/></svg>
<!-- share toolbar -->
<div class="a" style="left:386px;top:-10px;width:403px;height:28.5px;background:#2a2a2b;border-radius:0 0 9px 9px;box-shadow:0 1px 3px rgba(0,0,0,.3)"></div>
<div class="a" style="left:397px;top:4px;width:2.5px;height:6.5px;background:#ddd"></div>
<div class="a" style="left:403px;top:0px;width:2.5px;height:10.5px;background:#ddd"></div>
<div class="a" style="left:409px;top:-2px;width:2.5px;height:12.5px;background:#ddd"></div>
<div class="a" style="left:416px;top:-6px;font-size:15px;line-height:18px;color:#e8e8e8;white-space:nowrap">您正在共享屏幕</div>
<div class="a" style="left:533px;top:0;width:1px;height:10px;background:#555"></div>
<svg class="a" style="left:544px;top:-6px" width="26" height="21" viewBox="0 0 26 21"><path d="M4.5 0H20V9Q16 9 15 13L14 18H4.5Z" fill="#e6e6e6"/><path d="M2 19L19 1" stroke="#2a2a2b" stroke-width="3.2"/><path d="M2.5 18.5L18.5 1.5" stroke="#e6e6e6" stroke-width="1.5"/><circle cx="20" cy="13.7" r="5.6" fill="#e6e6e6" stroke="#2a2a2b" stroke-width="1.2"/><path d="M20.5 9Q17 11 19.5 13.5Q22.5 16 19 18.5" stroke="#2a2a2b" stroke-width="1.2" fill="none"/></svg>
<div class="a" style="left:581px;top:0;width:1px;height:10px;background:#555"></div>
<svg class="a" style="left:593px;top:-4px" width="20" height="16" viewBox="0 0 20 16"><path d="M0.5 2Q0.5 0.5 2 0.5H12V15L7 11.5H2Q0.5 11.5 0.5 10Z" fill="#e6e6e6"/><path d="M3.5 9Q4 5 8 5M6.5 3.5L8.5 5L6.5 6.8" stroke="#2a2a2b" stroke-width="1.3" fill="none"/><path d="M15 2Q18.5 7 15 12.5" stroke="#e6e6e6" stroke-width="1.8" fill="none"/></svg>
<div class="a" style="left:616px;top:-6px;font-size:15px;line-height:18px;color:#e8e8e8;white-space:nowrap">共享音频中</div>
<div class="a" style="left:704px;top:0;width:1px;height:10px;background:#555"></div>
<div class="a" style="left:714px;top:-6px;width:71px;height:20px;background:#d4502e;border-radius:0 0 6px 6px;font-size:14px;line-height:16px;color:#fff;text-align:center;padding-top:0px">结束共享</div>
<!-- right icons -->
<svg class="a" style="left:1086px;top:2px" width="22" height="22" viewBox="0 0 22 22"><path d="M14 1.5H5Q1.5 1.5 1.5 5V17Q1.5 20.5 5 20.5H17Q20.5 20.5 20.5 17V10" stroke="#333" stroke-width="1.3" fill="none"/><path d="M3 19Q3 12 6 9Q8 6 11 6.5Q15 7 16.5 10Q18 13 17 15Q19 17 17 19" stroke="#333" stroke-width="1.3" fill="none"/><path d="M6 10Q4 8 5.5 6.5M14 7.5Q15 5.5 17 6.5" stroke="#333" stroke-width="1.2" fill="none"/><circle cx="8" cy="13" r=".9" fill="#333"/><circle cx="13" cy="13" r=".9" fill="#333"/><path d="M9 16H12" stroke="#333" stroke-width="1.2"/><path d="M7 18.5H14" stroke="#333" stroke-width="1"/><path d="M18 0.5L19 3.5L22 4.5L19 5.5L18 8.5L17 5.5L14 4.5L17 3.5Z" fill="#333"/></svg>
<svg class="a" style="left:1128px;top:3px" width="19" height="19" viewBox="0 0 19 19"><rect x="1" y="5" width="13" height="13" rx="2" stroke="#333" stroke-width="1.3" fill="none"/><path d="M5 2H15Q18 2 18 5V15" stroke="#333" stroke-width="1.3" fill="none"/></svg>
<svg class="a" style="left:1168px;top:2px" width="20" height="21" viewBox="0 0 20 21"><path d="M10 1L19 5.5V15.5L10 20L1 15.5V5.5Z M1 5.5L10 10L19 5.5 M10 10V20" stroke="#333" stroke-width="1.3" fill="none" stroke-linejoin="round"/></svg>
<div class="a" style="left:1206px;top:-4px;width:30px;height:30px;border-radius:50%;border:2.6px solid #f2c164;background:radial-gradient(ellipse 24% 20% at 58% 22%,#4a4250 0 55%,transparent 100%),radial-gradient(ellipse 18% 28% at 20% 50%,#8a8088 0 30%,transparent 100%),radial-gradient(ellipse 14% 12% at 52% 48%,#e8c8c0 0 50%,transparent 100%),radial-gradient(circle at 50% 65%,#f2f0ec 0 35%,#dcd8d6 70%,#ccc8c8 100%)"></div>
<div class="a" style="left:1266px;top:11px;width:14px;height:1.5px;background:#333"></div>
<!-- MENU ROW -->
<svg class="a" style="left:9px;top:46px" width="20" height="20" viewBox="0 0 20 20"><path d="M2.5 18.5V3.5Q2.5 1.5 4.5 1.5H12L17.5 7V16.5Q17.5 18.5 15.5 18.5Z" stroke="#444" stroke-width="1.4" fill="none"/><path d="M5.5 5.5H8" stroke="#444" stroke-width="1.4"/><rect x="5.5" y="12" width="9" height="6.5" rx="1" stroke="#444" stroke-width="1.4" fill="none"/></svg>
<svg class="a" style="left:42px;top:46px" width="20" height="20" viewBox="0 0 20 20"><path d="M6.5 14V2H11Q16.5 2 16.5 7Q16.5 12 11 12H3Q1.5 13 1.5 15Q1.5 18 4 18Q6.5 18 6.5 14" stroke="#444" stroke-width="1.4" fill="none"/></svg>
<svg class="a" style="left:75px;top:46px" width="20" height="20" viewBox="0 0 20 20"><rect x="4.5" y="1.5" width="11" height="4.5" rx="1" stroke="#444" stroke-width="1.4" fill="none"/><path d="M4 15.5H2.5Q1.5 15.5 1.5 14.5V7Q1.5 6 2.5 6H17.5Q18.5 6 18.5 7V14.5Q18.5 15.5 17.5 15.5H16" stroke="#444" stroke-width="1.4" fill="none"/><rect x="4.5" y="11" width="11" height="7.5" rx="1.5" stroke="#444" stroke-width="1.4" fill="none"/></svg>
<svg class="a" style="left:108px;top:46px" width="21" height="21" viewBox="0 0 21 21"><rect x="4.5" y="1.5" width="10" height="4.5" rx="1" stroke="#444" stroke-width="1.4" fill="none"/><path d="M3.5 15.5H2.5Q1.5 15.5 1.5 14.5V7Q1.5 6 2.5 6H16.5Q17.5 6 17.5 7V8.5" stroke="#444" stroke-width="1.4" fill="none"/><path d="M4.5 17.5V12" stroke="#444" stroke-width="1.4"/><circle cx="12" cy="13" r="4.5" stroke="#444" stroke-width="1.4" fill="none"/><path d="M15.3 16.3L19 20" stroke="#444" stroke-width="1.4"/></svg>
<svg class="a" style="left:145px;top:47px" width="16" height="18" viewBox="0 0 16 18"><path d="M1.5 3V8H6.5" stroke="#aaa" stroke-width="1.3" fill="none"/><path d="M2 7.5Q5 3 9 3.5Q14 4.5 14 9Q14 12 8.5 17" stroke="#aaa" stroke-width="1.3" fill="none"/></svg>
<svg class="a" style="left:168px;top:53px" width="10" height="7" viewBox="0 0 10 7"><path d="M1.5 1.5L5 5L8.5 1.5" stroke="#aaa" stroke-width="1.2" fill="none"/></svg>
<svg class="a" style="left:195px;top:47px" width="16" height="18" viewBox="0 0 16 18"><path d="M14.5 3V8H9.5" stroke="#aaa" stroke-width="1.3" fill="none"/><path d="M14 7.5Q11 3 7 3.5Q2 4.5 2 9Q2 12 7.5 17" stroke="#aaa" stroke-width="1.3" fill="none"/></svg>
<svg class="a" style="left:229px;top:52px" width="14" height="9" viewBox="0 0 14 9"><path d="M1.5 1.5L7 7L12.5 1.5" stroke="#333" stroke-width="1.5" fill="none"/></svg>
<div class="a" style="left:261px;top:46px;width:1px;height:20px;background:#d4d1cc"></div>
<div class="a mt" style="left:288px;top:46px;color:#2b5fd3;font-weight:bold">开始</div>
<div class="a" style="left:288px;top:70px;width:34px;height:3px;background:#2b5fd3;border-radius:2px"></div>
<div class="a mt" style="left:364px;top:46px">插入</div>
<div class="a mt" style="left:441px;top:46px">页面</div>
<div class="a mt" style="left:517px;top:46px">引用</div>
<div class="a mt" style="left:594px;top:46px">审阅</div>
<div class="a mt" style="left:670px;top:46px">视图</div>
<div class="a mt" style="left:747px;top:46px">工具</div>
<div class="a mt" style="left:820px;top:46px">会员专享</div>
<div class="a" style="left:907px;top:46px;width:1px;height:20px;background:#d4d1cc"></div>
<svg class="a" style="left:929px;top:46px" width="20" height="18" viewBox="929 46 20 18"><defs><linearGradient id="lg1" x1="1" y1="0" x2="0" y2="1"><stop offset="0" stop-color="#20b8ff"/><stop offset=".45" stop-color="#3a3af0"/><stop offset="1" stop-color="#5a9cff"/></linearGradient><linearGradient id="lg2" x1="0" y1="0" x2="1" y2="1"><stop offset="0" stop-color="#f020e8"/><stop offset="1" stop-color="#ff90a0"/></linearGradient></defs><path d="M937.5 48.2H944L937.8 61.8H931Z" fill="url(#lg1)"/><path d="M941 54.5H948V62H944.5Z" fill="url(#lg2)"/></svg>


</body></html>
